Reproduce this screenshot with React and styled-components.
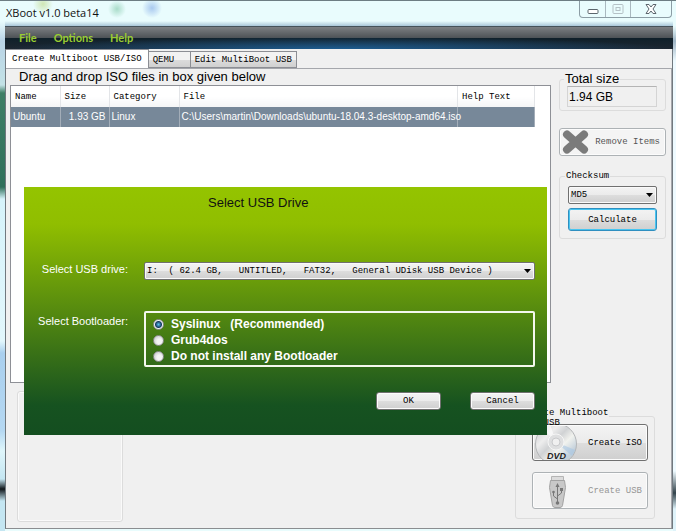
import React, { useState } from 'react';
import styled, { createGlobalStyle, css } from 'styled-components';

const mono = '"Liberation Mono", monospace';
const sans = '"Liberation Sans", sans-serif';

const GlobalStyle = createGlobalStyle`
  * {
    box-sizing: border-box;
  }
  body {
    margin: 0;
    background: #cdeef3;
    font-family: ${mono};
    font-size: 9px;
    color: #000;
  }
  button, select, input {
    font: inherit;
    color: inherit;
    margin: 0;
  }
`;

const Frame = styled.div`
  min-height: 100vh;
  display: flex;
  flex-direction: column;
  padding: 0 3px 2px 5px;
  border-top: 1px solid #6d7d83;
  background:
    linear-gradient(to bottom, transparent 20px, #b9d3e6 40px, #c3e2e6 84px, #3f7f66 92px, #2f6f5a 186px, #d6f3fa 198px, #e2f7fc 340px, #a9cfee 352px, #b5d8f2 430px, #dff6fb 450px, #c4e6f2 478px, #10161a 488px, #c4e6f2 500px) left / 5px 100% no-repeat,
    linear-gradient(to bottom, transparent 25px, #9fb4c4 40px, #eefaff 60px, #eefaff 470px, #33434b 492px, #dff3fa 508px) right / 3px 100% no-repeat,
    linear-gradient(#e9fcfd, #e9fcfd);
`;

const TitleBar = styled.header`
  height: 25px;
  display: flex;
  justify-content: space-between;
  align-items: flex-start;
  background:
    radial-gradient(circle at 112px 8px, #a9dcc9 0, transparent 9px),
    radial-gradient(circle at 147px 7px, #a9c9ef 0, transparent 10px),
    radial-gradient(circle at 38px 3px, #cfe6b4 0, transparent 10px),
    linear-gradient(to bottom, transparent 20px, #a9c6d8 25px);
`;

const Title = styled.h1`
  margin: 0;
  padding: 4px 0 0 1px;
  font: 11px/16px "Open Sans", sans-serif;
  color: #111;
`;

const Captions = styled.div`
  display: flex;
  margin-right: 1px;
  border: 1px solid #8c9da5;
  border-top: 0;
  border-radius: 0 0 4px 4px;
`;

const CaptionButton = styled.button`
  width: ${props => (props.$wide ? 41 : 25)}px;
  height: 16px;
  padding: 0;
  border: 0;
  background: none;
  display: flex;
  align-items: center;
  justify-content: center;

  & + & {
    border-left: 1px solid #a9b8bf;
  }
`;

const MenuBar = styled.nav`
  height: 23px;
  display: flex;
  align-items: center;
  gap: 17px;
  padding-left: 14px;
  border-top: 1px solid #46525a;
  background:
    radial-gradient(ellipse 50% 12px at 50% 100%, #1c5c90 0, transparent 100%),
    linear-gradient(to bottom, #7c7f82 0, #4d5256 50%, #10202a 52%, #1d2630 100%);
`;

const MenuItem = styled.a`
  font: bold 11px/16px Lato, sans-serif;
  color: #9acd32;
  text-decoration: none;
`;

const Client = styled.main`
  flex: 1;
  display: flex;
  flex-direction: column;
  background: #f0f0f0;
  border-left: 1px solid #71797f;
  border-right: 1px solid #71797f;
  border-bottom: 1px solid #8b8d90;
`;

const Tabs = styled.div`
  display: flex;
  align-items: flex-end;
  height: 19px;
`;

const Tab = styled.button`
  height: 17px;
  min-width: 42px;
  padding: 0 4px;
  text-align: left;
  border: 1px solid #8c8e94;
  border-left-width: 0;
  background: linear-gradient(#f2f2f2 50%, #dcdcdc 52%, #d0d0d0);

  ${props => props.$active && css`
    height: 19px;
    padding: 0 6px;
    border-bottom: 0;
    background: #fff;
  `}
`;

const Page = styled.div`
  flex: 1;
  display: flex;
  flex-direction: column;
  justify-content: space-between;
  padding: 0 5px 6px 4px;
  border-top: 1px solid #a5a7ac;
  border-right: 1px solid #a5a7ac;
`;

const Columns = styled.div`
  display: flex;
  gap: 8px;
`;

const ListSide = styled.section`
  flex: 1;
`;

const Hint = styled.h2`
  margin: 0;
  padding-left: 9px;
  font: 13px/16px ${sans};
`;

const ListBox = styled.div`
  height: 298px;
  background: #fff;
  border: 1px solid #8e9096;
  padding-right: 15px;
`;

const Table = styled.table`
  width: 100%;
  table-layout: fixed;
  border-collapse: collapse;
`;

const HeadCell = styled.th`
  height: 21px;
  padding: 0 4px;
  text-align: left;
  font-weight: normal;
  background: linear-gradient(#fff 50%, #f4f5f6);
  border-right: 1px solid #e3e5e8;
`;

const Cell = styled.td`
  height: 20px;
  padding: 0 3px 0 2px;
  font: 10px/12px ${sans};
  text-align: ${props => props.$align || 'left'};
  white-space: nowrap;
  color: #fff;
  background: #778899;
  border-right: 1px solid #a3adb8;
`;

const Sidebar = styled.aside`
  width: 107px;
  display: flex;
  flex-direction: column;
  padding-top: 3px;
`;

const Group = styled.fieldset`
  min-width: 0;
  margin: 0;
  padding: 5px 8px 7px;
  border: 1px solid #dcdcdc;
  border-radius: 3px;
`;

const Legend = styled.legend`
  padding: 0 1px;
  margin-left: -3px;
  font: ${props => (props.$large ? `13px/14px ${sans}` : `9px/10px ${mono}`)};
`;

const SizeGroup = styled(Group)`
  padding: 0 8px 3px 7px;
`;

const SizeValue = styled.input`
  display: block;
  width: 100%;
  height: 21px;
  padding: 0 1px;
  font: 12px/16px ${sans};
  background: #f0f0f0;
  border: 1px solid #d4d4d4;
  border-top-color: #b4b4b4;
`;

const Button = styled.button`
  height: ${props => props.$height || 18}px;
  padding: 0 5px;
  display: flex;
  align-items: center;
  justify-content: center;
  white-space: nowrap;
  border: 1px solid #707070;
  border-radius: 3px;
  box-shadow: inset 0 0 0 1px #fcfcfc;
  background: linear-gradient(#f3f3f3 0, #ebebeb 50%, #dddddd 52%, #cfcfcf 100%);

  &:disabled {
    color: #969696;
    border-color: #adb2b5;
    background: #f4f4f4;
  }
`;

const RemoveButton = styled(Button)`
  margin: 17px 0 15px;
  padding: 0 5px 0 2px;
  justify-content: space-between;

  &:disabled {
    color: #555;
  }
`;

const CalculateButton = styled(Button)`
  width: 100%;
  margin-top: 4px;
  border-color: #2f8fc0;
  box-shadow: inset 0 0 0 1px #48c5f0;
`;

const SelectWrap = styled.div`
  position: relative;
  display: flex;

  svg {
    position: absolute;
    right: 4px;
    top: 7px;
    pointer-events: none;
  }
`;

const Select = styled.select`
  appearance: none;
  flex: 1;
  min-width: 0;
  height: 18px;
  padding: 0 16px 0 2px;
  border: 1px solid #707070;
  border-radius: 2px;
  box-shadow: inset 0 0 0 1px #fafafa;
  background: linear-gradient(#f3f3f3 0, #ebebeb 50%, #dddddd 52%, #cfcfcf 100%);
`;

const Bottom = styled.div`
  display: flex;
  justify-content: space-between;
  align-items: flex-end;
  padding: 0 11px 0 7px;
`;

const EmptyGroup = styled(Group)`
  width: 106px;
  height: 131px;
  box-shadow: inset 0 0 0 1px #fafafa;
`;

const CreateGroup = styled(Group)`
  width: 140px;
  margin-bottom: 3px;
  padding: 0 6px 9px 16px;
`;

const CreateLegend = styled(Legend)`
  height: 16px;
  margin-left: -11px;
`;

const CreateButton = styled(Button)`
  width: 100%;
  height: 37px;
  padding: 0 5px 0 2px;
  justify-content: space-between;

  & + & {
    margin-top: 11px;
  }
`;

const Dialog = styled.form`
  position: absolute;
  top: 187px;
  left: 24px;
  right: 129px;
  padding: 7px 12px 25px 13px;
  color: #fff;
  background: linear-gradient(#94c400 0, #90be00 15%, #165220 88%, #144e20 100%);
`;

const DialogTitle = styled.h2`
  margin: 0 0 51px;
  padding-left: 171px;
  font: 13px/17px ${sans};
  color: #111;
`;

const Field = styled.div`
  display: grid;
  grid-template-columns: 91px 1fr;
  column-gap: 16px;
  margin-bottom: ${props => props.$gap}px;
`;

const FieldLabel = styled.label`
  padding-top: ${props => props.$top || 0}px;
  font: 11px/14px ${sans};
  text-align: right;
  white-space: nowrap;
`;

const DriveSelect = styled(Select)`
  color: #000;
`;

const RadioBox = styled.div`
  height: 56px;
  padding: 3px 7px;
  border: 2px solid #f4f8ee;
  border-radius: 2px;
`;

const RadioLabel = styled.label`
  display: flex;
  align-items: center;
  gap: 7px;
  height: 16px;
  font: bold 12px/16px ${sans};
  white-space: pre;
`;

const Radio = styled.input`
  appearance: none;
  width: 11px;
  height: 11px;
  border: 1px solid #8e8f8f;
  border-radius: 50%;
  background: radial-gradient(circle at 60% 60%, #f4f4f4 30%, #b9bdc1);

  &:checked {
    background: radial-gradient(circle, #5cc4ee 0, #163a63 3px, #eef2f4 4px);
  }
`;

const Actions = styled.div`
  display: flex;
  justify-content: flex-end;
  gap: 29px;

  button {
    width: 65px;
    color: #000;
  }
`;

const Arrow = () => (
  <svg width="7" height="4" viewBox="0 0 7 4" aria-hidden="true">
    <path d="M0 0h7L3.5 4z" fill="#000" />
  </svg>
);

const CrossIcon = () => (
  <svg width="27" height="24" viewBox="0 0 27 24" aria-hidden="true">
    <path d="M5 4.500 22 19.500M22 4.500 5 19.500" stroke="#7b7b7b" strokeWidth="8" strokeLinecap="round" />
  </svg>
);

const DiscIcon = () => (
  <svg width="42" height="34" viewBox="0 0 42 34" aria-hidden="true">
    <defs>
      <linearGradient id="disc" x1="0" y1="0" x2="1" y2="1">
        <stop offset="0" stopColor="#c3c5c7" />
        <stop offset=".3" stopColor="#ededed" />
        <stop offset=".45" stopColor="#d0d2d4" />
        <stop offset=".6" stopColor="#f1f2ee" />
        <stop offset=".8" stopColor="#c1cfdb" />
        <stop offset="1" stopColor="#d3d3c6" />
      </linearGradient>
    </defs>
    <circle cx="21" cy="18" r="20.500" fill="url(#disc)" stroke="#b4b6b8" />
    <path d="M21 16 7 2a20 20 0 0 1 8-4z" fill="#fff" opacity=".6" />
    <path d="M21 16 37 30a20 20 0 0 0 3-6z" fill="#a8c6e2" opacity=".6" />
    <circle cx="21" cy="16" r="8" fill="#dedfe0" stroke="#f6f6f6" />
    <circle cx="21" cy="16" r="4" fill="#f0f0f0" stroke="#c8c9cb" />
    <text x="12" y="33" fontFamily="Liberation Sans, sans-serif" fontSize="9" fontWeight="bold" fontStyle="italic" fill="#222">DVD</text>
  </svg>
);

const UsbIcon = () => (
  <svg width="42" height="34" viewBox="0 0 42 34" aria-hidden="true">
    <path d="M16.500 2.500h12v5h-12z" fill="#dcdcdc" stroke="#b4b4b4" />
    <path d="M15.500 6.500h14l1 7-3 18q-.5 2-2.500 2h-5q-2 0-2.500-2l-3-18z" fill="#c8c8c8" stroke="#a2a2a2" />
    <path d="M22.500 29V12M22.500 25l-4-3v-4M22.500 22l4-3v-3" fill="none" stroke="#777" />
    <path d="m22.500 9 2 4h-4z" fill="#777" />
    <circle cx="22.500" cy="29" r="1.800" fill="#777" />
    <circle cx="18.500" cy="18" r="1.300" fill="#777" />
    <path d="M25 14h3v3h-3z" fill="#777" />
  </svg>
);

const loaders = ['Syslinux   (Recommended)', 'Grub4dos', 'Do not install any Bootloader'];
const columns = [
  { name: 'Name', width: 49 },
  { name: 'Size', width: 49 },
  { name: 'Category', width: 70 },
  { name: 'File' },
  { name: 'Help Text', width: 77 },
];
const drive = 'I:  ( 62.4 GB,   UNTITLED,   FAT32,   General UDisk USB Device )'.replace(/ /g, '\u00a0');

const DriveDialog = () => {
  const [loader, setLoader] = useState(loaders[0]);
  return (
    <Dialog role="dialog" aria-labelledby="dialog-title" onSubmit={e => e.preventDefault()}>
      <DialogTitle id="dialog-title">Select USB Drive</DialogTitle>
      <Field $gap={31}>
        <FieldLabel htmlFor="drive">Select USB drive:</FieldLabel>
        <SelectWrap>
          <DriveSelect id="drive"><option>{drive}</option></DriveSelect>
          <Arrow />
        </SelectWrap>
      </Field>
      <Field $gap={25}>
        <FieldLabel as="span" id="loader-label" $top={3}>Select Bootloader:</FieldLabel>
        <RadioBox role="radiogroup" aria-labelledby="loader-label">
          {loaders.map(name => (
            <RadioLabel key={name}>
              <Radio type="radio" name="loader" checked={loader === name} onChange={() => setLoader(name)} />
              {name}
            </RadioLabel>
          ))}
        </RadioBox>
      </Field>
      <Actions>
        <Button type="submit">OK</Button>
        <Button type="button">Cancel</Button>
      </Actions>
    </Dialog>
  );
};

export default function App() {
  return (
    <>
      <GlobalStyle />
      <Frame>
        <TitleBar>
          <Title>XBoot v1.0 beta14</Title>
          <Captions>
            <CaptionButton aria-label="Minimize">
              <svg width="12" height="12" viewBox="0 0 12 12">
                <rect x="1" y="6.500" width="10" height="4" rx="1" fill="#fff" stroke="#5c666d" />
              </svg>
            </CaptionButton>
            <CaptionButton aria-label="Maximize" disabled>
              <svg width="12" height="12" viewBox="0 0 12 12" fill="none" stroke="#b5c1c6">
                <rect x="1" y="1.500" width="10" height="9" rx="1" />
                <rect x="4" y="4.500" width="4" height="3" />
              </svg>
            </CaptionButton>
            <CaptionButton aria-label="Close" $wide>
              <svg width="12" height="12" viewBox="0 0 12 12">
                <path d="M1 1.500h3l2 2.500 2-2.500h3L8 6l3 4.500H8L6 8l-2 2.500H1L4 6z" fill="#fff" stroke="#5c666d" />
              </svg>
            </CaptionButton>
          </Captions>
        </TitleBar>
        <MenuBar>
          <MenuItem href="#file">File</MenuItem>
          <MenuItem href="#options">Options</MenuItem>
          <MenuItem href="#help">Help</MenuItem>
        </MenuBar>
        <Client>
          <Tabs role="tablist">
            <Tab role="tab" aria-selected="true" $active>Create Multiboot USB/ISO</Tab>
            <Tab role="tab">QEMU</Tab>
            <Tab role="tab">Edit MultiBoot USB</Tab>
          </Tabs>
          <Page>
            <Columns>
              <ListSide>
                <Hint>Drag and drop ISO files in box given below</Hint>
                <ListBox>
                  <Table>
                    <colgroup>
                      {columns.map(col => <col key={col.name} width={col.width} />)}
                    </colgroup>
                    <thead>
                      <tr>{columns.map(col => <HeadCell key={col.name}>{col.name}</HeadCell>)}</tr>
                    </thead>
                    <tbody>
                      <tr>
                        <Cell>Ubuntu</Cell>
                        <Cell $align="right">1.93 GB</Cell>
                        <Cell>Linux</Cell>
                        <Cell>C:\Users\martin\Downloads\ubuntu-18.04.3-desktop-amd64.iso</Cell>
                        <Cell />
                      </tr>
                    </tbody>
                  </Table>
                </ListBox>
              </ListSide>
              <Sidebar>
                <SizeGroup>
                  <Legend $large>Total size</Legend>
                  <SizeValue aria-label="Total size" readOnly value="1.94 GB" />
                </SizeGroup>
                <RemoveButton $height={28} disabled><CrossIcon />Remove Items</RemoveButton>
                <Group>
                  <Legend>Checksum</Legend>
                  <SelectWrap>
                    <Select aria-label="Checksum"><option>MD5</option></Select>
                    <Arrow />
                  </SelectWrap>
                  <CalculateButton $height={23}>Calculate</CalculateButton>
                </Group>
              </Sidebar>
            </Columns>
            <Bottom>
              <EmptyGroup />
              <CreateGroup>
                <CreateLegend>Create Multiboot<br />ISO/USB</CreateLegend>
                <CreateButton><DiscIcon />Create ISO</CreateButton>
                <CreateButton disabled><UsbIcon />Create USB</CreateButton>
              </CreateGroup>
            </Bottom>
          </Page>
        </Client>
        <DriveDialog />
      </Frame>
    </>
  );
}
